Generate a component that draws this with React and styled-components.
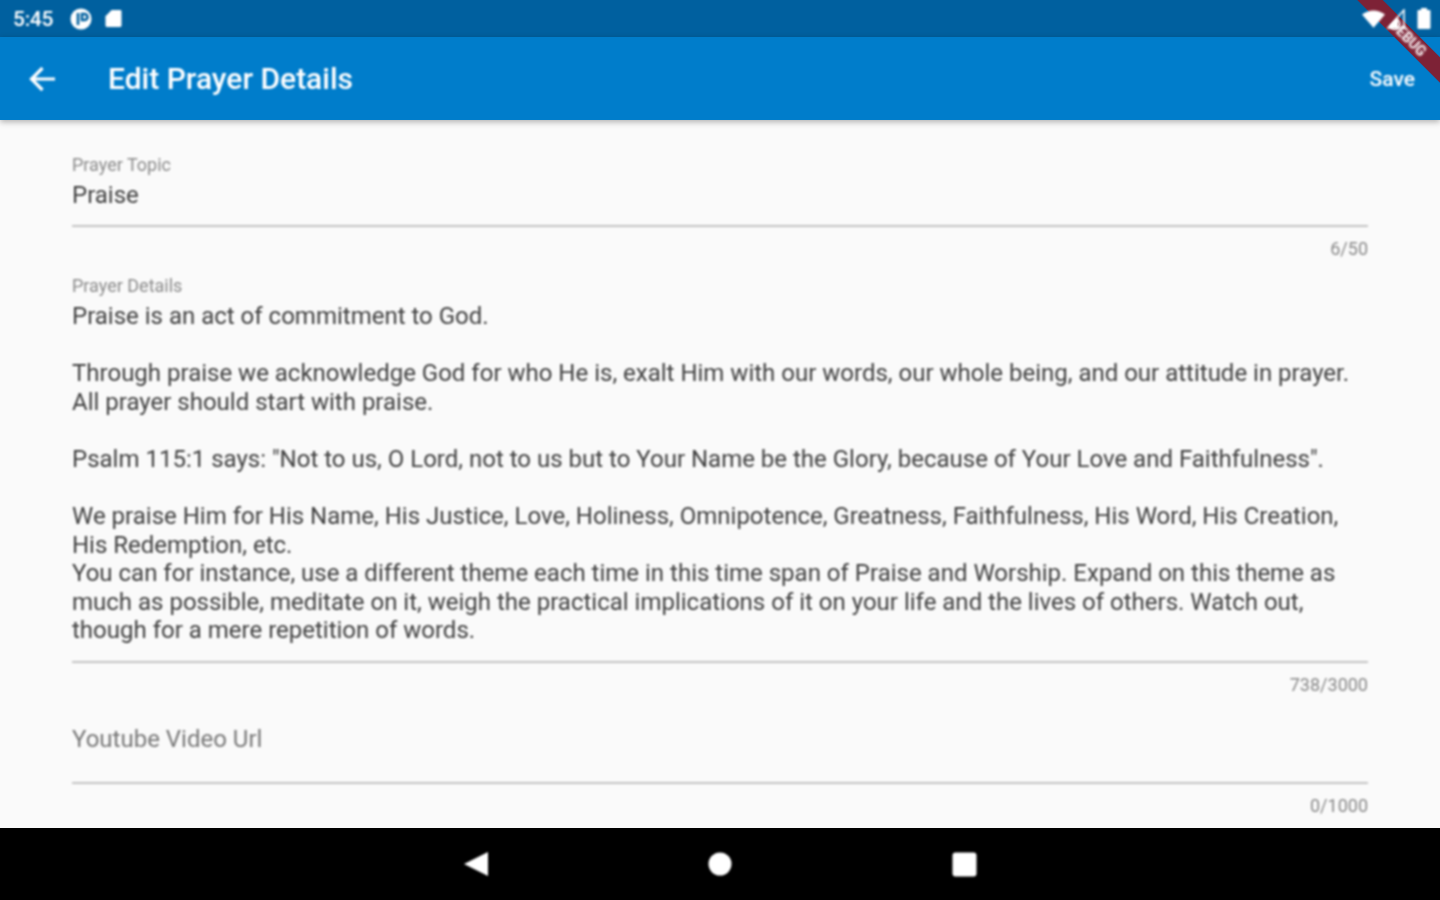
import React from "react";
import styled, { createGlobalStyle, css } from "styled-components";

const Global = createGlobalStyle`
  html, body { margin: 0; padding: 0; background: #000; }
  body { font-family: Roboto, "Liberation Sans", sans-serif; }
`;
const soft = css`filter: blur(0.8px);`;
const Screen = styled.div`
  width: 1440px; height: 900px; display: flex; flex-direction: column;
  position: relative; overflow: hidden; background: #fafafa;
`;
const StatusBar = styled.div`
  height: 37px; flex: none; background: #00609f; color: #fff; display: flex; align-items: center;
  justify-content: space-between; padding: 0 9px 0 13px; box-sizing: border-box;
`;
const StatusGroup = styled.div`display: flex; align-items: center; gap: ${p => p.$gap}px; position: relative; z-index: 4; ${soft}`;
const Time = styled.span`font-size: 21px; font-weight: 500; letter-spacing: -0.3px; width: 44px;`;
const SignalIcon = styled.svg`margin-right: 10px;`;
const AppBar = styled.header`
  height: 83px; flex: none; background: #007dcb; color: #fff; display: flex; align-items: center;
  padding: 0 25px 0 29px; box-sizing: border-box; box-shadow: 0 2px 6px rgba(0,0,0,.3); position: relative; z-index: 1;
`;
const BackIcon = styled.svg`flex: none; ${soft}`;
const Title = styled.h1`margin: 0 0 0 52px; font-size: 30px; font-weight: 500; flex: 1; ${soft}`;
const SaveButton = styled.span`font-size: 21px; font-weight: 500; ${soft}`;
const Form = styled.main`flex: 1; min-height: 0; overflow: hidden; padding: 0 72px; box-sizing: border-box; ${soft}`;
const Field = styled.section`height: ${p => p.$height}px; display: flex; flex-direction: column; padding-top: ${p => p.$top}px; box-sizing: border-box;`;
const Label = styled.div`font-size: 18px; line-height: 22px; color: #8a8a8a;`;
const Value = styled.div`font-size: 24px; line-height: 28.57px; color: #404040; white-space: pre; margin-top: 5px;`;
const Placeholder = styled.div`font-size: 24px; line-height: 28px; color: #777; margin-top: ${p => p.$top}px;`;
const Rule = styled.div`height: 2px; background: #c4c4c4; margin-top: ${p => p.$top}px; flex: none;`;
const Counter = styled.div`font-size: 18px; line-height: 20px; color: #888; text-align: right; margin-top: 12px;`;
const NavBar = styled.nav`height: 72px; flex: none; background: #000; display: flex; align-items: center; justify-content: center; padding-left: 1px;`;
const NavIcons = styled.div`display: flex; align-items: center; gap: 220px; ${soft}`;
const Banner = styled.div`
  position: absolute; top: 29px; right: -48px; width: 160px; height: 18px; background: #7d2236; color: #fff;
  transform: rotate(45deg); text-align: center; font-size: 14px; line-height: 18px; font-weight: 700; z-index: 3;
`;
const BannerText = styled.span`display: block; ${soft}`;

const details = `Praise is an act of commitment to God.

Through praise we acknowledge God for who He is, exalt Him with our words, our whole being, and our attitude in prayer.
All prayer should start with praise.

Psalm 115:1 says: "Not to us, O Lord, not to us but to Your Name be the Glory, because of Your Love and Faithfulness".

We praise Him for His Name, His Justice, Love, Holiness, Omnipotence, Greatness, Faithfulness, His Word, His Creation,
His Redemption, etc.
You can for instance, use a different theme each time in this time span of Praise and Worship. Expand on this theme as
much as possible, meditate on it, weigh the practical implications of it on your life and the lives of others. Watch out,
though for a mere repetition of words.`;

export default function App() {
  return (
    <Screen>
      <Global />
      <StatusBar>
        <StatusGroup $gap={13}>
          <Time>5:45</Time>
          <svg width="22" height="22" viewBox="0 0 22 22"><circle cx="11" cy="11" r="10.5" fill="#fff"/><path d="M8 5v12M12 6h2.500a3 3 0 0 1 0 6H12z" stroke="#00609f" strokeWidth="2.600" fill="none"/></svg>
          <svg width="17" height="19" viewBox="0 0 18 20"><path d="M7 1h9a1.500 1.500 0 0 1 1.500 1.500v15a1.500 1.500 0 0 1-1.500 1.500H2A1.500 1.500 0 0 1 .5 17.500V7.500z" fill="#fff"/></svg>
        </StatusGroup>
        <StatusGroup $gap={2}>
          <svg width="23" height="20" viewBox="0 0 26 20"><path d="M0 5Q13-4 26 5L13 20z" fill="#fff"/></svg>
          <SignalIcon width="18" height="20" viewBox="0 0 18 20"><path d="M17 1V19H1z" fill="none" stroke="#fff" strokeWidth="1.500"/><path d="M11 8V19H1z" fill="#fff"/></SignalIcon>
          <svg width="14" height="21" viewBox="0 0 14 21"><path d="M4 0h6v2h2.500a1 1 0 0 1 1 1v17a1 1 0 0 1-1 1H1.500a1 1 0 0 1-1-1V3a1 1 0 0 1 1-1H4z" fill="#fff"/></svg>
        </StatusGroup>
      </StatusBar>
      <AppBar>
        <BackIcon width="27" height="26" viewBox="0 0 27 26" fill="none" stroke="#fff" strokeWidth="3.200"><path d="M26 13H3M13.500 2 2.500 13l11 11"/></BackIcon>
        <Title>Edit Prayer Details</Title>
        <SaveButton>Save</SaveButton>
      </AppBar>
      <Banner><BannerText>DEBUG</BannerText></Banner>
      <Form>
        <Field $height={139} $top={34}>
          <Label>Prayer Topic</Label>
          <Value>Praise</Value>
          <Rule $top={15} />
          <Counter>6/50</Counter>
        </Field>
        <Field $height={435} $top={16}>
          <Label>Prayer Details</Label>
          <Value>{details}</Value>
          <Rule $top={16} />
          <Counter>738/3000</Counter>
        </Field>
        <Field $height={134} $top={15}>
          <Placeholder $top={16}>Youtube Video Url</Placeholder>
          <Rule $top={29} />
          <Counter>0/1000</Counter>
        </Field>
      </Form>
      <NavBar>
        <NavIcons>
          <svg width="24" height="26" viewBox="0 0 24 26"><path d="M24 1V25L0 13z" fill="#fff"/></svg>
          <svg width="24" height="24" viewBox="0 0 24 24"><circle cx="12" cy="12" r="11.500" fill="#fff"/></svg>
          <svg width="25" height="25" viewBox="0 0 25 25"><rect x=".5" y=".5" width="24" height="24" rx="3" fill="#fff"/></svg>
        </NavIcons>
      </NavBar>
    </Screen>
  );
}
